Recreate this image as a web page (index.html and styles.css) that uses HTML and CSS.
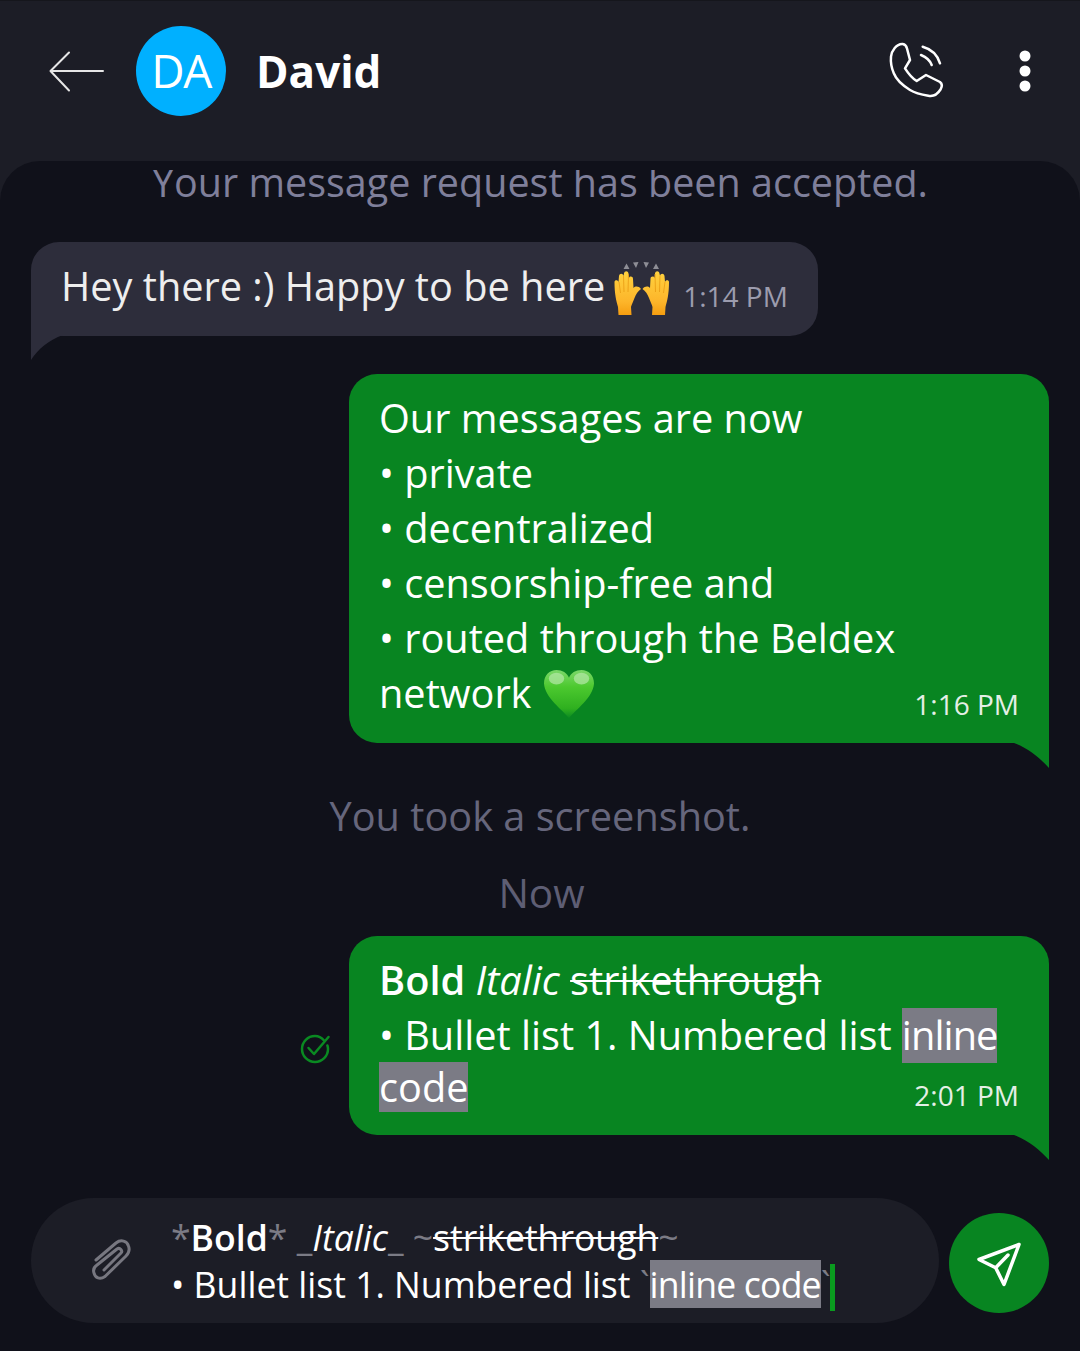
FILE: index.html
```html
<!DOCTYPE html>
<html lang="en">
<head>
<meta charset="utf-8">
<title>David</title>
<link rel="stylesheet" href="styles.css">
</head>
<body>
<div class="app">
  <header class="topbar">
    <svg class="back" width="56" height="42" viewBox="0 0 56 42"><path d="M54 21H2M20 2.500 1.500 21 20 40.500"/></svg>
    <div class="avatar">DA</div>
    <div class="name">David</div>
    <svg class="call" width="60" height="60" viewBox="0 0 60 60"><path d="M15.700 4C18.500 4.500 19.500 6.500 20 8.500L23 20 18 28.300C21 33 25 38 29.700 41L39 35 53 42C55.500 44 55 47 53.500 49.500 50 55 45 56.500 41.300 55.700 34 54.500 28 53 23 50 15 45 9 39 6.800 33.300 4.500 28 3.500 22 4 16.700 4.500 11 9.500 3.500 15.700 4Z"/><path d="M34 15C39 17 43 20.500 44.700 25M35.700 6.700C44 9 50.500 15 53 23.300"/></svg>
    <svg class="more" width="12" height="42" viewBox="0 0 12 42"><circle cx="6" cy="6" r="5.500"/><circle cx="6" cy="21" r="5.500"/><circle cx="6" cy="36" r="5.500"/></svg>
  </header>
  <main class="chat">
    <section class="thread">
      <p class="sys sys-first">Your message request has been accepted.</p>
      <div class="bubble in">
        <span class="msg-text">Hey there :) Happy to be here</span>
        <svg class="emoji-hands" width="58" height="58" viewBox="0 0 58 58">
          <defs><linearGradient id="hy" x1="0" y1="0" x2="0" y2="1"><stop offset="0" stop-color="#ffd23f"/><stop offset=".7" stop-color="#fdb52a"/><stop offset="1" stop-color="#f59d10"/></linearGradient></defs>
          <path class="spark" d="M10.500 10 13.500 4.500 16.500 10ZM20 3.500 25.500 3 23 9ZM30.500 3 36 3.500 33 9ZM40 10 43 4.500 46 10Z"/>
          <path class="hand" d="M1.500 23C1.500 20.500 5 20.500 5.500 23L6 17C6.500 14 10 14 10.500 17L11 14.500C11.500 11.500 15 11.500 15.500 14.500L16 19C16.500 17 20 17 20 20L20.500 29C22.500 27 25.500 27 28 30 25 32 23 35 21.500 39 20 43 18.500 46 18 48L18.500 56H5.500L5 48C3.500 42 1.500 36 1.500 23Z"/>
          <path class="hand" d="M56 23C56 20.500 52.500 20.500 52 23L51.500 17C51 14 47.500 14 47 17L46.500 14.500C46 11.500 42.500 11.500 42 14.500L41.500 19C41 17 37.500 17 37.500 20L37 29C35 27 32 27 29.500 30 32.500 32 34.500 35 36 39 37.500 43 39 46 39.500 48L39 56H52L52.500 48C54 42 56 36 56 23Z"/>
          <path class="fold" d="M6 23 7.500 34M10.500 17 11 33M15.500 15 15 33M52 23 50.500 34M47 17 46.500 33M42 15 42.500 33"/>
        </svg>
        <time class="stamp stamp-in">1:14 PM</time>
        <svg class="tail tail-in" width="32" height="25" viewBox="0 0 32 25"><path d="M0 25C7 14 18 5 32 0H0Z"/></svg>
      </div>
      <div class="row row-first">
        <div class="bubble out">
          <div class="line">Our messages are now</div>
          <div class="line">• private</div>
          <div class="line">• decentralized</div>
          <div class="line">• censorship-free and</div>
          <div class="line">• routed through the Beldex</div>
          <div class="line last">
            <span class="line-main">network
              <svg class="emoji-heart" width="52" height="50" viewBox="0 0 54 52">
                <defs><linearGradient id="hg" x1="0" y1="0" x2="0" y2="1"><stop offset="0" stop-color="#7cd86a"/><stop offset=".35" stop-color="#4cc92f"/><stop offset=".8" stop-color="#2fb01f"/><stop offset="1" stop-color="#0b8a22"/></linearGradient></defs>
                <path fill="url(#hg)" d="M27 51C20 42 2 30 1 15 1 6 7 1 14 1 20 1 25 4 27 9 29 4 34 1 40 1 47 1 53 6 53 15 52 30 34 42 27 51Z"/>
                <ellipse cx="14" cy="10" rx="8" ry="6" fill="#b5e8a8" opacity=".7"/>
                <ellipse cx="40" cy="10" rx="8" ry="6" fill="#b5e8a8" opacity=".7"/>
              </svg>
            </span>
            <time class="stamp stamp-out">1:16 PM</time>
          </div>
          <svg class="tail tail-out" width="35" height="25" viewBox="0 0 35 25"><path d="M0 0C14 5 26 15 35 25V0Z"/></svg>
        </div>
      </div>
      <p class="sys sys-shot">You took a screenshot.</p>
      <p class="sys sys-now">Now</p>
      <div class="row row-second">
        <svg class="sent" width="32" height="32" viewBox="0 0 32 32"><path d="M25 7.500C22.500 4.500 19.500 3 16 3 8.800 3 3 8.800 3 16S8.800 29 16 29 29 23.200 29 16C29 14.500 28.800 13.500 28.400 12.500"/><path d="M9.500 15 15 21 29.500 4"/></svg>
        <div class="bubble out out-second">
          <div class="line"><b>Bold</b> <i>Italic</i> <s>strikethrough</s></div>
          <div class="line">• Bullet list 1. Numbered list <code class="mono">inline</code></div>
          <div class="line last last-second">
            <code class="mono">code</code>
            <time class="stamp stamp-out">2:01 PM</time>
          </div>
          <svg class="tail tail-out" width="35" height="25" viewBox="0 0 35 25"><path d="M0 0C14 5 26 15 35 25V0Z"/></svg>
        </div>
      </div>
    </section>
    <footer class="composer">
      <div class="input">
        <svg class="clip" width="44" height="46" viewBox="0 0 44 46"><path d="M6 22 26 5C31 1 37 3 38.500 8 40 12 38 16 36 18L15 38.500C10 42 5 40 4 35 3 32 4 29 7 27L27 11C30 9 33 13 31 15L14 32"/></svg>
        <div class="draft">
          <div class="draft-line"><span class="mark">*</span><b>Bold</b><span class="mark">*</span> <span class="mark">_</span><i>Italic</i><span class="mark">_</span> <span class="mark">~</span><s>strikethrough</s><span class="mark">~</span></div>
          <div class="draft-line">• Bullet list 1. Numbered list <span class="mark">`</span><span class="code-draft">inline code</span><span class="mark">`</span><span class="caret"></span></div>
        </div>
      </div>
      <button class="send" type="button" aria-label="Send">
        <svg width="46" height="46" viewBox="0 0 46 46"><path d="M43 3.500 3 18.500 19.700 26.800 28 43.500ZM19.700 26.800 32 14"/></svg>
      </button>
    </footer>
  </main>
</div>
</body>
</html>
```
FILE: styles.css
```css
* { box-sizing: border-box; }
html, body { margin: 0; padding: 0; }
body { background: #1c1d26; font-family: "Open Sans", "Noto Sans", sans-serif; color: #fff; }
.app { width: 1080px; height: 1351px; display: flex; flex-direction: column; overflow: hidden; }

.topbar { height: 161px; flex: none; display: flex; align-items: center; padding: 0 49px 20px 49px; border-top: 1px solid #15161c; }
.back { flex: none; margin-right: 31px; }
.back path { fill: none; stroke: #e6e6e6; stroke-width: 2; stroke-linecap: round; stroke-linejoin: round; }
.avatar { width: 90px; height: 90px; flex: none; border-radius: 50%; background: #00b0ff; display: flex; align-items: center; justify-content: center; font-size: 46px; font-weight: 400; letter-spacing: -1.500px; padding-bottom: 2px; margin-right: 30px; }
.name { font-size: 44px; font-weight: 700; flex: 1; }
.call { flex: none; margin: -2px 72px 0 0; }
.call path { fill: none; stroke: #fff; stroke-width: 2.500; stroke-linecap: round; stroke-linejoin: round; }
.more { flex: none; fill: #fff; }

.chat { flex: 1; min-height: 0; background: #10111a; border-radius: 40px 40px 0 0; display: flex; flex-direction: column; padding-top: 9px; }
.thread { flex: 1; min-height: 0; overflow: hidden; display: flex; flex-direction: column; }

.sys { margin: 0; text-align: center; color: #7f7f9a; font-size: 39.700px; line-height: 50px; }
.sys-first { margin-top: -13px; font-size: 39.500px; }
.sys-shot { margin-top: 46px; color: #66667c; line-height: 55px; }
.sys-now { margin-top: 21px; color: #5e5e74; font-size: 40.500px; font-weight: 500; line-height: 55px; padding-left: 3px; }

.bubble { position: relative; font-size: 39.700px; line-height: 55px; }
.bubble.in { background: #2d2d3b; border-radius: 28px 28px 28px 0; align-self: flex-start; margin: 35px 0 0 31px; width: 787px; height: 94px; padding: 17px 30px 0 30px; display: flex; align-items: flex-start; color: #eeeeee; }
.msg-text { white-space: nowrap; }
.emoji-hands { flex: none; margin: 0 0 0 8px; }
.spark { fill: #8e8e96; }
.hand { fill: url(#hy); }
.fold { fill: none; stroke: #e89a12; stroke-width: .8; }
.stamp { font-size: 28px; line-height: 38px; white-space: nowrap; }
.stamp-in { color: #9c9cae; margin-left: 12px; margin-top: 18px; }
.tail { position: absolute; }
.tail-in { left: 0; bottom: -24px; fill: #2d2d3b; }
.tail-out { right: 0; bottom: -25px; fill: #088521; }

.row { display: flex; justify-content: flex-end; align-items: center; padding-right: 31px; }
.row-first { margin-top: 38px; }
.row-second { margin-top: 16px; gap: 18px; }
.sent { flex: none; margin-top: 26px; }
.sent path { fill: none; stroke: #0a8a22; stroke-width: 2.500; stroke-linecap: round; stroke-linejoin: round; }
.bubble.out { background: #088521; border-radius: 28px 28px 0 28px; width: 700px; padding: 17px 30px 22px 30px; }
.bubble.out-second { padding-top: 17px; padding-bottom: 23px; }
.line { white-space: nowrap; }
.last { display: flex; justify-content: space-between; align-items: flex-end; }
.line-main { display: flex; align-items: center; gap: 12px; }
.emoji-heart { flex: none; }
.stamp-out { color: #e4efe6; margin-bottom: -2px; }
.last-second { line-height: 50px; margin-top: -1px; }
.mono { font-family: inherit; background: #7b7b85; letter-spacing: -.9px; }
.out-second .line .mono { display: inline-block; height: 55px; line-height: 55px; }
.out-second .last-second .mono { height: 50px; line-height: 50px; letter-spacing: 0; }
s { text-decoration-thickness: 2px; }
b { font-weight: 600; }

.composer { flex: none; display: flex; align-items: center; gap: 10px; padding: 0 31px 28px; }
.input { width: 908px; height: 125px; background: #1c1d26; border-radius: 62.500px; display: flex; align-items: center; padding-left: 59px; }
.clip { flex: none; margin-right: 37px; }
.clip path { fill: none; stroke: #777780; stroke-width: 3; stroke-linecap: round; stroke-linejoin: round; }
.draft { font-size: 35.600px; line-height: 47px; white-space: nowrap; margin-top: 4px; }
.draft-line { white-space: pre; }
.mark { color: #7b7b85; }
.code-draft { background: #7b7b85; letter-spacing: -.8px; }
.caret { display: inline-block; width: 5px; height: 47px; background: #0a9b1f; margin-left: -1px; vertical-align: middle; }
.send { flex: none; width: 100px; height: 100px; margin-top: 5px; border: 0; padding: 0; border-radius: 50%; background: #088521; display: flex; align-items: center; justify-content: center; }
.send svg { transform: translate(0, 1px); }
.send path { fill: none; stroke: #fff; stroke-width: 3.500; stroke-linecap: round; stroke-linejoin: round; }
```
